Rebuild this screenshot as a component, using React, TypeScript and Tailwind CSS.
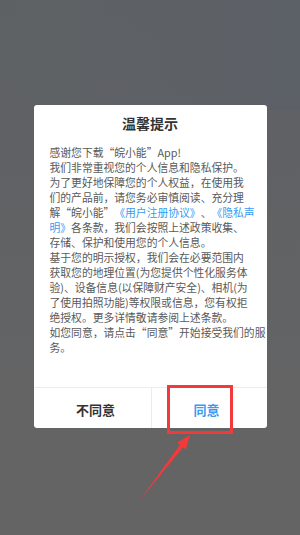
import React from "react";

const Blue = ({ children }: { children: React.ReactNode }) => (
  <span className="text-[#3a9bf0]">{children}</span>
);

export default function App() {
  const lines: React.ReactNode[] = [
    <>感谢您下载“皖小能”App!</>,
    <>我们非常重视您的个人信息和隐私保护。</>,
    <>为了更好地保障您的个人权益，在使用我</>,
    <>们的产品前，请您务必审慎阅读、充分理</>,
    <>
      解“皖小能”<Blue>《用户注册协议》</Blue>、<Blue>《隐私声</Blue>
    </>,
    <>
      <Blue>明》</Blue>各条款，我们会按照上述政策收集、
    </>,
    <>存储、保护和使用您的个人信息。</>,
    <>基于您的明示授权，我们会在必要范围内</>,
    <>获取您的地理位置(为您提供个性化服务体</>,
    <>验)、设备信息(以保障财产安全)、相机(为</>,
    <>了使用拍照功能)等权限或信息，您有权拒</>,
    <>绝授权。更多详情敬请参阅上述条款。</>,
    <>如您同意，请点击“同意”开始接受我们的服</>,
    <>务。</>,
  ];

  return (
    <div
      className="relative w-[300px] h-[535px] overflow-hidden bg-[linear-gradient(180deg,#5e6164_0%,#606264_40%,#646464_80%)] [text-spacing-trim:space-all]"
      style={{ fontFamily: '"Noto Sans CJK SC", "Roboto", sans-serif' }}
    >
      <div className="pointer-events-none absolute inset-x-0 top-0 h-[110px] bg-[linear-gradient(90deg,rgba(100,100,100,0.0)_0%,rgba(90,96,104,0.6)_100%)]" />
      <div className="relative pt-[105px] flex justify-center">
        <div className="w-[233px] bg-white rounded-[3px] flex flex-col">
          <div className="pt-[8px] text-center text-[14px] leading-[20px] font-bold text-[#333]">
            温馨提示
          </div>
          <div className="mt-[11.5px] px-[16px] text-[10.8px] leading-[15px] text-[#595959]">
            {lines.map((l, i) => (
              <div key={i} className="whitespace-nowrap">
                {l}
              </div>
            ))}
          </div>
          <div className="mt-[32.5px] h-[41px] flex border-t border-[#ececec]">
            <div className="flex-1 flex items-center justify-center pt-[4px] pl-[7px] text-[13px] font-bold text-[#333] border-r border-[#ececec]">
              不同意
            </div>
            <div className="flex-1 flex items-center justify-center pt-[4px] pr-[5px] text-[13px] font-bold text-[#3a9bf0]">
              同意
            </div>
          </div>
        </div>
      </div>
      <div className="absolute left-[167px] top-[385px] w-[66px] h-[49px] border-[3px] border-[#f23a3a]" />
      <svg
        className="pointer-events-none absolute left-0 top-0"
        width="300"
        height="535"
        viewBox="0 0 300 535"
      >
        <polygon
          points="140,500 179.9,444.8 177.2,442.6 190,435 185.8,449.4 183.1,447.2"
          fill="#f23a3a"
        />
      </svg>
    </div>
  );
}
